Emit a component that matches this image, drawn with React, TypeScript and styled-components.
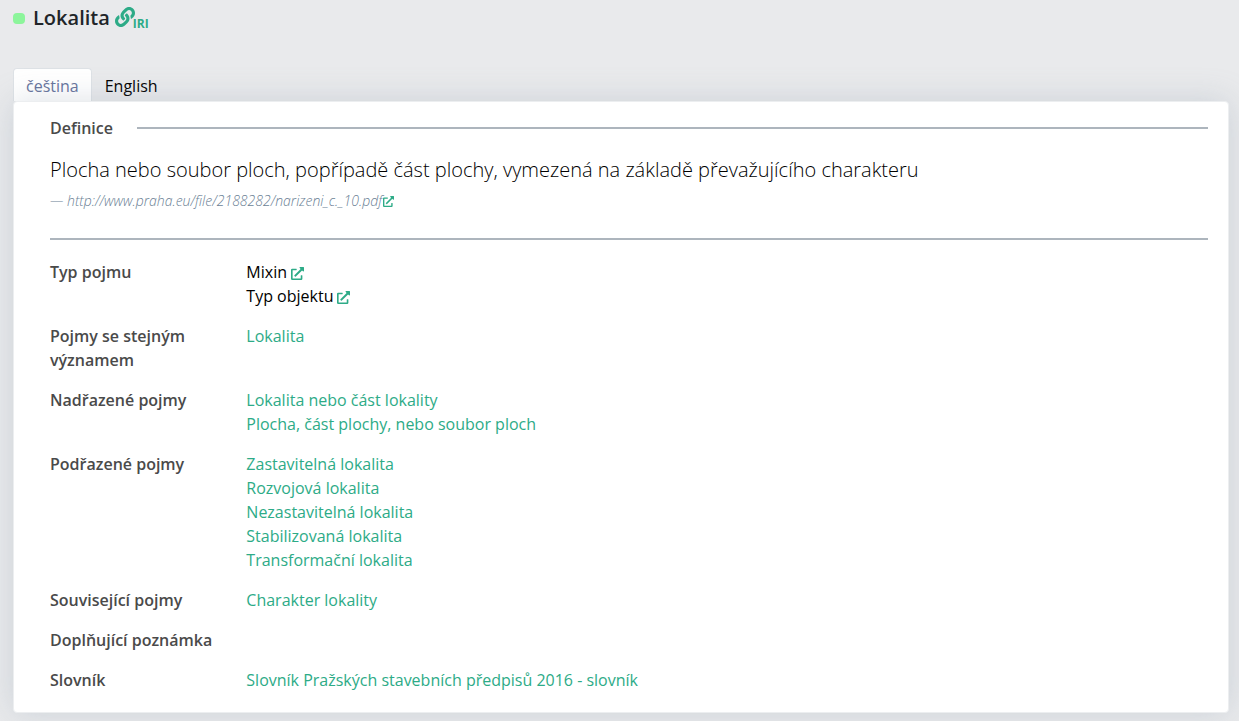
import React from "react";
import styled, { createGlobalStyle } from "styled-components";
import { FaExternalLinkAlt, FaLink } from "react-icons/fa";

const GlobalStyle = createGlobalStyle`
  *, *::before, *::after { box-sizing: border-box; }
  body {
    margin: 0;
    background: #e9eaec;
    color: #000;
    font: 400 16px/24px "Open Sans", sans-serif;
  }
`;

const Page = styled.main`
  padding: 2px 10px 8px 13px;
`;

const Header = styled.header`
  display: flex;
  align-items: center;
  height: 32px;
`;

const Status = styled.span`
  width: 12px;
  height: 11px;
  margin-right: 8px;
  border-radius: 4px;
  background: #8cf59b;
`;

const Title = styled.h1`
  margin: 0;
  color: #212529;
  font-size: 20px;
  line-height: 32px;
  font-weight: 600;
`;

const IriLink = styled.a`
  display: flex;
  align-items: flex-end;
  height: 24px;
  margin-left: 5px;
  color: #2dab87;
  font-size: 12px;
  line-height: 12px;
  font-weight: 700;
  text-decoration: none;

  svg {
    width: 20px;
    height: 20px;
    margin: 0 -2px 3px 0;
  }
`;

const Tabs = styled.div`
  display: flex;
  margin-top: 34px;
`;

const Tab = styled.button<{ $active?: boolean }>`
  height: 33px;
  padding: 2px 12px 0;
  border: 1px solid ${(p) => (p.$active ? "#dee2e6" : "transparent")};
  border-bottom: 0;
  border-radius: 4px 4px 0 0;
  background: ${(p) => (p.$active ? "#fff" : "transparent")};
  color: ${(p) => (p.$active ? "#66739c" : "#000")};
  font: inherit;
`;

const Card = styled.article`
  position: relative;
  padding: 14px 20px 20px 36px;
  border: 1px solid #eceef0;
  border-radius: 4px;
  background: #fff;
  box-shadow: 0 0 32px rgba(136, 152, 170, 0.3);
`;

const SectionHead = styled.div`
  display: flex;
  align-items: center;
  gap: 24px;
`;

const Label = styled.h2`
  margin: 0;
  color: #4a4a4a;
  font-size: 16px;
  line-height: 24px;
  font-weight: 600;
`;

const Rule = styled.hr`
  flex: 1;
  height: 2px;
  margin: 0;
  border: 0;
  background: #adb5bd;
`;

const Definition = styled.blockquote`
  margin: 13px 0 23px;
  font-size: 20px;
  line-height: 34px;
  font-weight: 300;
`;

const Source = styled.footer`
  display: flex;
  align-items: center;
  color: #6b7f95;
  font-size: 14px;
  line-height: 28px;
  font-style: italic;
`;

const Details = styled.dl`
  display: grid;
  grid-template-columns: 1fr 5fr;
  row-gap: 16px;
  column-gap: 4px;
  margin: 20px 0 0;
`;

const Term = styled.dt`
  padding-right: 16px;
  color: #4a4a4a;
  font-weight: 600;
`;

const Values = styled.dd`
  margin: 0;
`;

const Value = styled.div``;

const Anchor = styled.a`
  color: #2dab87;
  text-decoration: none;
`;

const External = styled(Anchor)<{ $small?: boolean }>`
  display: inline-flex;
  margin-left: ${(p) => (p.$small ? 1 : 4)}px;
  vertical-align: middle;

  svg {
    width: ${(p) => (p.$small ? 11 : 13)}px;
    height: ${(p) => (p.$small ? 11 : 13)}px;
  }
`;

const rows: { term: string; values: string[]; external?: boolean }[] = [
  { term: "Typ pojmu", values: ["Mixin", "Typ objektu"], external: true },
  { term: "Pojmy se stejným významem", values: ["Lokalita"] },
  {
    term: "Nadřazené pojmy",
    values: ["Lokalita nebo část lokality", "Plocha, část plochy, nebo soubor ploch"],
  },
  {
    term: "Podřazené pojmy",
    values: [
      "Zastavitelná lokalita",
      "Rozvojová lokalita",
      "Nezastavitelná lokalita",
      "Stabilizovaná lokalita",
      "Transformační lokalita",
    ],
  },
  { term: "Související pojmy", values: ["Charakter lokality"] },
  { term: "Doplňující poznámka", values: [] },
  { term: "Slovník", values: ["Slovník Pražských stavebních předpisů 2016 - slovník"] },
];

export default function App() {
  return (
    <>
      <GlobalStyle />
      <Page>
        <Header>
          <Status />
          <Title>Lokalita</Title>
          <IriLink href="#iri">
            <FaLink />
            IRI
          </IriLink>
        </Header>
        <Tabs role="tablist">
          <Tab type="button" role="tab" aria-selected="true" $active>
            čeština
          </Tab>
          <Tab type="button" role="tab" aria-selected="false">
            English
          </Tab>
        </Tabs>
        <Card>
          <SectionHead>
            <Label>Definice</Label>
            <Rule />
          </SectionHead>
          <Definition>
            Plocha nebo soubor ploch, popřípadě část plochy, vymezená na základě převažujícího charakteru
            <Source>
              — http://www.praha.eu/file/2188282/narizeni_c._10.pdf
              <External href="#source" aria-label="http://www.praha.eu" $small>
                <FaExternalLinkAlt />
              </External>
            </Source>
          </Definition>
          <Rule />
          <Details>
            {rows.map((row) => (
              <React.Fragment key={row.term}>
                <Term>{row.term}</Term>
                <Values>
                  {row.values.map((value) => (
                    <Value key={value}>
                      {row.external ? (
                        <>
                          {value}
                          <External href="#type" aria-label={value}>
                            <FaExternalLinkAlt />
                          </External>
                        </>
                      ) : (
                        <Anchor href="#term">{value}</Anchor>
                      )}
                    </Value>
                  ))}
                </Values>
              </React.Fragment>
            ))}
          </Details>
        </Card>
      </Page>
    </>
  );
}
